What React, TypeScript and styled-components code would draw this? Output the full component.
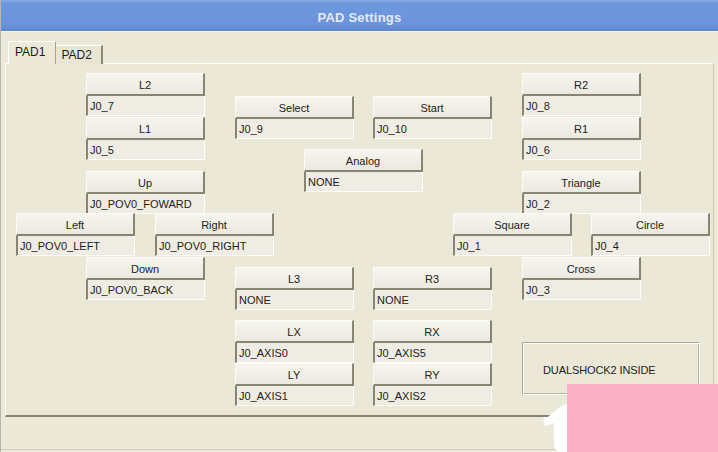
import React from "react";
import styled, { createGlobalStyle } from "styled-components";

const GlobalStyle = createGlobalStyle`
  html, body { margin: 0; padding: 0; background: #ece9d8; }
  body { font-family: "Liberation Sans", Arial, sans-serif; }
  * { box-sizing: border-box; }
`;

const Window = styled.div`
  position: relative;
  width: 718px;
  height: 452px;
  overflow: hidden;
  display: flex;
  flex-direction: column;
  background: #ece9d8;
  border-left: 1px solid #b9b7ab;
`;

const TitleBar = styled.div`
  height: 31px;
  flex: none;
  display: flex;
  align-items: center;
  justify-content: center;
  background: linear-gradient(#8caeea 0px, #6e98de 3px, #6b94db 24px, #6089d1 30px, #5a82c8 31px);
  color: #e2eaf8;
  font-size: 13px;
  font-weight: 700;
  letter-spacing: 0.2px;
  padding-top: 3px;
`;

const Body = styled.div`
  flex: 1;
  display: flex;
  flex-direction: column;
  padding: 10px 4px 0 4px;
  border-top: 1px solid #f6f5ee;
  border-bottom: 1px solid #cfccbd;
  margin-bottom: 2px;
`;

const TabStrip = styled.div`
  height: 22px;
  display: flex;
  align-items: flex-end;
  padding-left: 3px;
  position: relative;
  z-index: 1;
  margin-bottom: -1px;
`;

const Tab = styled.div<{ $active?: boolean }>`
  height: ${(p) => (p.$active ? 23 : 19)}px;
  padding: 0 ${(p) => (p.$active ? 10 : 9)}px 0 ${(p) => (p.$active ? 6 : 5)}px;
  display: flex;
  align-items: center;
  font-size: 12px;
  color: #1e1e1e;
  background: ${(p) => (p.$active ? "#ece9d8" : "#e8e5d4")};
  border-top: 1px solid #ffffff;
  border-left: ${(p) => (p.$active ? "1px solid #ffffff" : "none")};
  border-right: ${(p) => (p.$active ? "1px solid #a7a493" : "2px solid #8b8875")};
  padding-bottom: ${(p) => (p.$active ? 2 : 0)}px;
`;

const Panel = styled.div`
  position: relative;
  height: 354px;
  width: 709px;
  border-top: 1px solid #ffffff;
  border-left: 1px solid #fbfaf5;
  border-right: 1px solid #c9c6b6;
  border-bottom: 2px solid #858271;
  background: #ebe8d7;
`;

const Binding = styled.div<{ $x: number; $y: number }>`
  position: absolute;
  left: ${(p) => p.$x}px;
  top: ${(p) => p.$y}px;
  width: 119px;
  display: flex;
  flex-direction: column;
`;

const MapButton = styled.div`
  height: 23px;
  display: flex;
  align-items: center;
  justify-content: center;
  font-size: 11px;
  color: #222;
  background: linear-gradient(#f6f5ef, #ebe9df);
  border-top: 1px solid #fbfbf7;
  border-left: 1px solid #fbfbf7;
  border-right: 2px solid #878471;
  border-bottom: 2px solid #878471;
  padding-top: 1px;
`;

const Field = styled.div`
  height: 20px;
  display: flex;
  align-items: center;
  padding-left: 2px;
  font-size: 11px;
  color: #1c1c1c;
  background: #efede3;
  border-left: 2px solid #878471;
  border-right: 1px solid #fdfdfa;
  border-bottom: 1px solid #fdfdfa;
  white-space: nowrap;
  overflow: hidden;
`;

const InfoBox = styled.div`
  position: absolute;
  left: 516px;
  top: 278px;
  width: 178px;
  height: 53px;
  display: flex;
  align-items: center;
  padding-left: 20px;
  padding-top: 2px;
  font-size: 11px;
  letter-spacing: -0.1px;
  color: #222;
  border-top: 1px solid #a9a696;
  border-left: 1px solid #a9a696;
  border-right: 1px solid #fdfdf9;
  border-bottom: 1px solid #fdfdf9;
  box-shadow: inset 1px 1px 0 #fdfdf9, inset -1px -1px 0 #b9b6a6;
`;

const Stamp = styled.div`
  position: absolute;
  right: 0;
  bottom: 0;
  width: 151px;
  height: 68px;
  background: #fdb1c8;
`;

const StampMark = styled.svg`
  position: absolute;
  left: 542px;
  top: 404px;
  width: 26px;
  height: 48px;
`;

type B = { label: string; value: string; x: number; y: number };

const bindings: B[] = [
  { label: "L2", value: "J0_7", x: 80, y: 9 },
  { label: "L1", value: "J0_5", x: 80, y: 53 },
  { label: "Select", value: "J0_9", x: 229, y: 32 },
  { label: "Start", value: "J0_10", x: 367, y: 32 },
  { label: "R2", value: "J0_8", x: 516, y: 9 },
  { label: "R1", value: "J0_6", x: 516, y: 53 },
  { label: "Analog", value: "NONE", x: 298, y: 85 },
  { label: "Up", value: "J0_POV0_FOWARD", x: 80, y: 107 },
  { label: "Triangle", value: "J0_2", x: 516, y: 107 },
  { label: "Left", value: "J0_POV0_LEFT", x: 10, y: 149 },
  { label: "Right", value: "J0_POV0_RIGHT", x: 149, y: 149 },
  { label: "Square", value: "J0_1", x: 447, y: 149 },
  { label: "Circle", value: "J0_4", x: 585, y: 149 },
  { label: "Down", value: "J0_POV0_BACK", x: 80, y: 193 },
  { label: "Cross", value: "J0_3", x: 516, y: 193 },
  { label: "L3", value: "NONE", x: 229, y: 203 },
  { label: "R3", value: "NONE", x: 367, y: 203 },
  { label: "LX", value: "J0_AXIS0", x: 229, y: 256 },
  { label: "RX", value: "J0_AXIS5", x: 367, y: 256 },
  { label: "LY", value: "J0_AXIS1", x: 229, y: 299 },
  { label: "RY", value: "J0_AXIS2", x: 367, y: 299 },
];

export default function App() {
  return (
    <>
      <GlobalStyle />
      <Window>
        <TitleBar>PAD Settings</TitleBar>
        <Body>
          <TabStrip>
            <Tab $active>PAD1</Tab>
            <Tab>PAD2</Tab>
          </TabStrip>
          <Panel>
            {bindings.map((b) => (
              <Binding key={b.label} $x={b.x} $y={b.y}>
                <MapButton>{b.label}</MapButton>
                <Field>{b.value}</Field>
              </Binding>
            ))}
            <InfoBox>DUALSHOCK2 INSIDE</InfoBox>
          </Panel>
        </Body>
        <StampMark viewBox="0 0 26 48">
          <path d="M0 17 L18 2 L24 0 L26 0 L26 48 L16 48 Q11 46 11 40 L11 19 L2 22 Z" fill="#ffffff" />
          <path d="M1 13 L19 13 L19 18 L1 18 Z" fill="#ffffff" />
        </StampMark>
        <Stamp />
      </Window>
    </>
  );
}
